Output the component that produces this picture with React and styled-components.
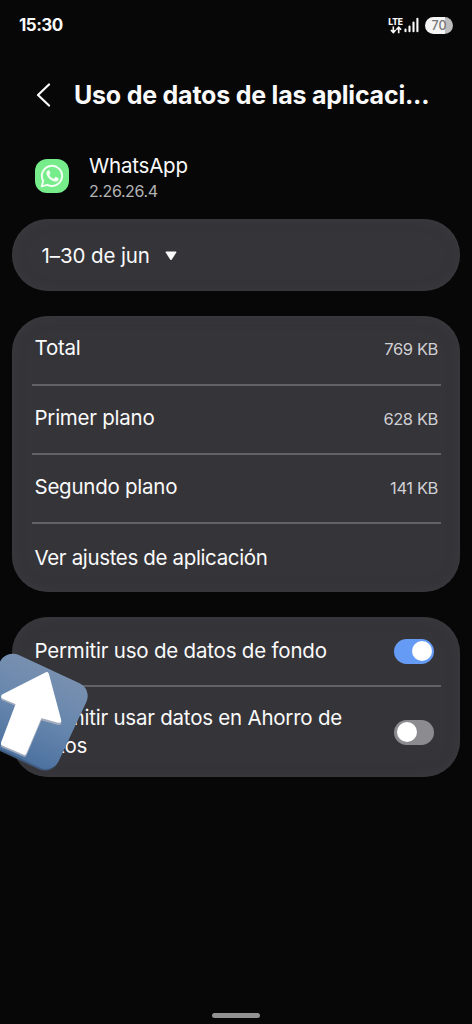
import React from 'react';
import styled, {createGlobalStyle} from 'styled-components';

const GlobalStyle = createGlobalStyle`
    * {
        box-sizing: border-box;
    }
    body {
        margin: 0;
        background: #070707;
    }
`

const Screen = styled.main`
    position: relative;
    display: flex;
    flex-direction: column;
    width: 472px;
    height: 1024px;
    overflow: hidden;
    background: #070707;
    color: #fafafa;
    font-family: Inter, "Liberation Sans", sans-serif;
`

const StatusBar = styled.div`
    display: flex;
    align-items: center;
    justify-content: space-between;
    height: 50px;
    padding: 0 19px;
`

const Clock = styled.span`
    font-size: 17px;
    font-weight: 700;
    letter-spacing: -0.5px;
`

const StatusIcons = styled.div`
    display: flex;
    align-items: center;
`

const Network = styled.div`
    display: flex;
    flex-direction: column;
    align-items: center;
    width: 15px;
    margin-right: 1px;
    padding-top: 1px;
    font-size: 8.5px;
    font-weight: 800;
    line-height: 8px;
    letter-spacing: -0.2px;
`

const Battery = styled.span`
    width: 28px;
    height: 17px;
    margin-left: 6px;
    border-radius: 9px;
    background: linear-gradient(90deg, #f4f4f4 71%, #bdbdbd 71%);
    color: #777;
    font-size: 12.5px;
    font-weight: 500;
    line-height: 17px;
    text-align: center;
`

const Header = styled.header`
    display: flex;
    align-items: center;
    height: 90px;
    padding: 0 0 1px 36px;
`

const Title = styled.h1`
    margin: 0 0 0 23px;
    font-size: 25px;
    font-weight: 700;
    letter-spacing: ${({spacing}) => spacing};
    white-space: nowrap;
`

const AppInfo = styled.section`
    display: flex;
    align-items: center;
    height: 79px;
    padding: 0 35px 7px;
`

const AppIcon = styled.div`
    display: flex;
    align-items: center;
    justify-content: center;
    width: 34px;
    height: 34px;
    margin-right: 20px;
    border-radius: 12px;
    background: #77ec8b;
`

const AppName = styled.div`
    padding-top: 3px;
    font-size: 20.5px;
    line-height: 26px;
    letter-spacing: ${({spacing}) => spacing};
`

const Version = styled.div`
    color: #b4b4b6;
    font-size: 16px;
    line-height: 24px;
    letter-spacing: ${({spacing}) => spacing};
`

const Card = styled.section`
    flex: none;
    margin: 0 12px 25px;
    padding: 0 19.5px;
    border-radius: 36px;
    background: #353439;
    box-shadow: inset 0 0 12px #3b3a3f;
`

const Period = styled(Card)`
    display: flex;
    align-items: center;
    gap: 15px;
    height: 72px;
    padding: 1px 29.5px 0;
`

const Row = styled.div`
    display: flex;
    align-items: center;
    justify-content: space-between;
    height: ${({height}) => height || '69px'};
    padding: 0 ${({end}) => end || '2.5px'} ${({lift}) => lift || '4px'} 3px;
    border-bottom: 2px solid #626166;
    &:last-child {
        border-bottom: none;
    }
`

const Label = styled.span`
    font-size: 20.5px;
    line-height: 28px;
    letter-spacing: ${({spacing}) => spacing || '-0.25px'};
`

const Value = styled.span`
    padding-top: 2px;
    color: #d0cfd3;
    font-size: 16.5px;
    letter-spacing: ${({spacing}) => spacing || '-0.4px'};
`

const Switch = styled.span`
    display: flex;
    flex: none;
    align-items: center;
    justify-content: ${({on}) => (on ? 'flex-end' : 'flex-start')};
    width: 40px;
    height: 25px;
    padding: 0 2.5px;
    border-radius: 13px;
    background: ${({on}) => (on ? '#659bf5' : '#8c8b90')};
`

const Knob = styled.span`
    width: 20px;
    height: 20px;
    border-radius: 50%;
    background: #fff;
`

const Sticker = styled.svg`
    position: absolute;
    top: 650px;
    left: 0;
`

const HomeBar = styled.div`
    width: 48px;
    height: 5px;
    margin: auto auto 6px;
    border-radius: 3px;
    background: #929292;
`

const usage = [
    {name: 'Total', value: '769 KB', height: '70px'},
    {name: 'Primer plano', value: '628 KB'},
    {name: 'Segundo plano', value: '141 KB'},
]

const DataArrows = () => (
    <svg width="12" height="8" viewBox="0 0 12 8" fill="none" stroke="#fafafa" strokeWidth="1.6">
        <path d="M3.3 0.5V6M0.9 4L3.3 6.5L5.7 4M8.7 7.2V1.5M6.3 3.7L8.7 1.2L11.1 3.7"/>
    </svg>
)

const Signal = () => (
    <svg width="15" height="16" viewBox="0 0 15 16" stroke="#fafafa" strokeWidth="2.1" strokeLinecap="round">
        <path d="M1.5 12.5V14.3M5.5 9.5V14.3M9.5 5.5V14.3M13.4 1.8V14.3"/>
    </svg>
)

const WhatsAppLogo = () => (
    <svg width="24" height="24" viewBox="0 0 24 24">
        <path d="M1.7 22.3L3.2 16.9A10.1 10.1 0 1 1 7.2 20.8Z" fill="none" stroke="#f3fff3" strokeWidth="1.9" strokeLinejoin="round"/>
        <path d="M8.2 6.3C8.6 6.1 9.2 6.1 9.5 6.7L10.4 8.8C10.6 9.3 10.3 9.7 9.6 10.5C9.3 10.8 9.4 11.1 9.6 11.4C10.5 12.9 11.7 13.9 13.3 14.6C13.7 14.8 13.9 14.7 14.2 14.4L15.2 13.2C15.5 12.8 15.8 12.8 16.2 13L18.2 14C18.6 14.2 18.7 14.4 18.6 14.9C18.3 16.6 17 17.6 15.3 17.6C13.4 17.5 11.3 16.4 9.5 14.8C7.9 13.2 6.4 11.2 6.4 9.3C6.4 7.9 7.1 6.9 8.2 6.3Z" fill="#f3fff3"/>
    </svg>
)

const ArrowSticker = () => (
    <Sticker width="92" height="126" viewBox="0 0 92 126">
        <defs>
            <linearGradient id="tile" x1="0" y1="0" x2="0" y2="1">
                <stop offset="0" stopColor="#7890b0"/>
                <stop offset="0.5" stopColor="#6686ad"/>
                <stop offset="1" stopColor="#4d72a0"/>
            </linearGradient>
        </defs>
        <rect x="-19" y="15.5" width="95" height="94" rx="14" fill="#405b80" transform="rotate(25 28.5 62.4)"/>
        <rect x="-18.5" y="14.5" width="95" height="93" rx="14" fill="url(#tile)" transform="rotate(25 28.5 62.4)"/>
        <g strokeWidth="5" strokeLinejoin="round">
            <path d="M46.5 26.5L59 72.5L40 67.3L24.3 104.3L3.5 95.3L18.8 54.5L3.7 48.3Z" fill="#a3adbd" stroke="#a3adbd"/>
            <path d="M46.5 24.7L58.7 70.3L40 65L24.2 102.3L3.4 93.3L18.8 52.7L3.7 46.5Z" fill="#fff" stroke="#fff"/>
        </g>
    </Sticker>
)

const App = () => {
    return (
        <Screen>
            <GlobalStyle/>
            <StatusBar>
                <Clock>15:30</Clock>
                <StatusIcons>
                    <Network>LTE<DataArrows/></Network>
                    <Signal/>
                    <Battery>70</Battery>
                </StatusIcons>
            </StatusBar>
            <Header>
                <svg width="15" height="24" viewBox="0 0 15 24" fill="none" stroke="#fafafa" strokeWidth="2.2" strokeLinecap="round" strokeLinejoin="round">
                    <path d="M13 1.5L2 12L13 22.5"/>
                </svg>
                <Title spacing="-0.22px">Uso de datos de las aplicaci...</Title>
            </Header>
            <AppInfo>
                <AppIcon><WhatsAppLogo/></AppIcon>
                <div>
                    <AppName spacing="-0.2px">WhatsApp</AppName>
                    <Version spacing="-0.4px">2.26.26.4</Version>
                </div>
            </AppInfo>
            <Period>
                <Label spacing="-0.1px">1–30 de jun</Label>
                <svg width="12" height="10" viewBox="0 0 12 10" fill="#fafafa">
                    <path d="M1.2 0.5H10.8Q12 0.5 11.3 1.6L6.8 8.4Q6 9.4 5.2 8.4L0.7 1.6Q0 0.5 1.2 0.5Z"/>
                </svg>
            </Period>
            <Card>
                {usage.map(({name, value, height}) => (
                    <Row key={name} height={height}>
                        <Label>{name}</Label>
                        <Value>{value}</Value>
                    </Row>
                ))}
                <Row height="68px" lift="0px"><Label spacing="-0.35px">Ver ajustes de aplicación</Label></Row>
            </Card>
            <Card>
                <Row end="6.5px" height="70px" lift="0px">
                    <Label spacing="-0.2px">Permitir uso de datos de fondo</Label>
                    <Switch on><Knob/></Switch>
                </Row>
                <Row end="6.5px" height="90px" lift="0px">
                    <Label spacing="-0.23px">Permitir usar datos en Ahorro de<br/>datos</Label>
                    <Switch><Knob/></Switch>
                </Row>
            </Card>
            <ArrowSticker/>
            <HomeBar/>
        </Screen>
    )
}

export default App
